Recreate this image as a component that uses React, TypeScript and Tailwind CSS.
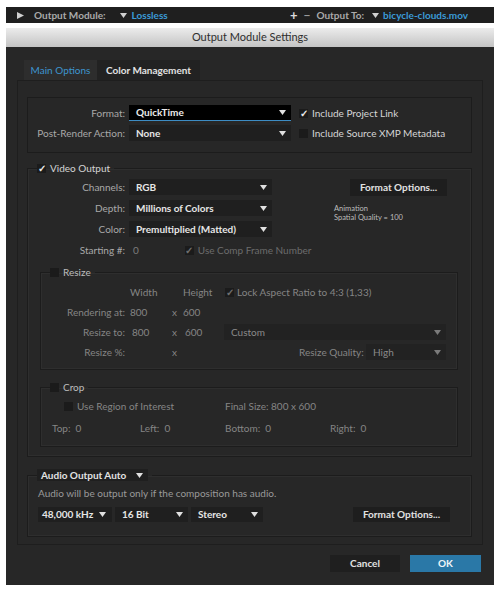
import React from "react";

type Children = { children?: React.ReactNode };

const Arrow = ({ className = "fill-[#e0e0e0]" }: { className?: string }) => (
  <svg width="7" height="5" viewBox="0 0 7 5" className={`shrink-0 ${className}`}>
    <path d="M0 0h7L3.5 5z" />
  </svg>
);

const Check = ({ checked, dim }: { checked?: boolean; dim?: boolean }) => (
  <span className="relative inline-flex h-[9px] w-[9px] shrink-0 items-center justify-center bg-[#1b1b1b]">
    {checked && (
      <span
        className={`text-[10px] leading-none font-bold ${dim ? "text-[#6e6e6e]" : "text-[#e8e8e8]"}`}
      >
        ✓
      </span>
    )}
  </span>
);

type DropProps = {
  value: string;
  className: string;
  dim?: boolean;
};

const Dropdown = ({ value, className, dim }: DropProps) => (
  <div className={`flex shrink-0 items-center justify-between pl-[7px] pr-[5px] ${className}`}>
    <span className={dim ? "text-[#8a8a8a]" : "font-bold text-[#e6e6e6]"}>{value}</span>
    <Arrow className={dim ? "fill-[#7a7a7a]" : "fill-[#e0e0e0]"} />
  </div>
);

const Group = ({ legend, className, children }: Children & { legend: React.ReactNode; className: string }) => (
  <fieldset className={`border border-[#1c1c1c] shadow-[inset_0_0_0_1px_#2e2e2e] ${className}`}>
    <legend className="ml-[9px] flex h-[12px] items-center gap-[4px] pr-[4px]">{legend}</legend>
    {children}
  </fieldset>
);

export default function App() {
  return (
    <div className="h-[594px] w-[500px] bg-white px-[6px] pt-[7px] font-['Lato',sans-serif] text-[10px] whitespace-nowrap text-[#a9a9a9]">
      {/* Top bar */}
      <div className="flex h-[16px] items-center bg-[#1f1f1f] pl-[11px] font-bold text-[#aaaaaa]">
        <svg width="7" height="7" viewBox="0 0 7 7" className="fill-[#cfcfcf]">
          <path d="M0 0l7 3.5L0 7z" />
        </svg>
        <span className="ml-[10px]">Output Module:</span>
        <Arrow className="ml-[14px] fill-[#d0d0d0]" />
        <span className="ml-[5px] text-[#3b9bd8]">Lossless</span>
        <span className="ml-auto text-[13px] leading-none text-[#dcdcdc]">+</span>
        <span className="ml-[6px] text-[12px] leading-none text-[#9a9a9a]">−</span>
        <span className="ml-[6px]">Output To:</span>
        <Arrow className="ml-[8px] fill-[#d0d0d0]" />
        <span className="ml-[4px] mr-[26px] text-[#3b9bd8]">bicycle-clouds.mov</span>
      </div>

      {/* Title bar */}
      <div className="mt-[5px] flex h-[19px] items-center justify-center bg-gradient-to-b from-[#ececec] to-[#c4c4c4] text-[11px] text-[#2e2e2e]">
        Output Module Settings
      </div>

      {/* Dialog body */}
      <div className="flex h-[538px] flex-col bg-[#272727] px-[11px] pt-[13px]">
        {/* Tabs */}
        <div className="ml-[7px] flex h-[20px]">
          <div className="flex w-[73px] items-center justify-center bg-[#2d2d2d] text-[#3d95cf]">Main Options</div>
          <div className="flex w-[103px] items-center justify-center bg-[#222222] font-bold text-[#e2e2e2]">
            Color Management
          </div>
        </div>

        {/* Tab panel */}
        <div className="flex h-[465px] flex-col border border-[#1e1e1e] pl-[9px] pr-[10px] pt-[16px]">
          {/* Format box */}
          <div className="flex h-[56px] flex-col gap-[4px] border border-[#1c1c1c] pt-[7px]">
            <div className="flex h-[16px] items-center">
              <span className="w-[97px] shrink-0 text-right">Format:</span>
              <div className="ml-[4px] flex h-[16px] w-[162px] shrink-0 items-center justify-between border-b border-[#3d8cc4] bg-black pl-[7px] pr-[5px]">
                <span className="font-bold text-[#ececec]">QuickTime</span>
                <Arrow />
              </div>
              <span className="ml-[8px] flex items-center gap-[4px] text-[#d6d6d6]">
                <Check checked />
                Include Project Link
              </span>
            </div>
            <div className="flex h-[16px] items-center">
              <span className="w-[97px] shrink-0 text-right">Post-Render Action:</span>
              <Dropdown value="None" className="ml-[4px] h-[16px] w-[162px] bg-[#1f1f1f]" />
              <span className="ml-[8px] flex items-center gap-[4px] text-[#d6d6d6]">
                <Check />
                Include Source XMP Metadata
              </span>
            </div>
          </div>

          {/* Video Output */}
          <Group
            className="mt-[9px] h-[295px]"
            legend={
              <>
                <Check checked />
                <span className="text-[#d4d4d4]">Video Output</span>
              </>
            }
          >
            <div className="mt-[5px] flex">
              <div className="flex w-[245px] shrink-0 flex-col gap-[5px]">
                {[
                  ["Channels:", "RGB"],
                  ["Depth:", "Millions of Colors"],
                  ["Color:", "Premultiplied (Matted)"],
                ].map(([label, value]) => (
                  <div key={label} className="flex h-[16px] items-center">
                    <span className="w-[97px] shrink-0 text-right">{label}</span>
                    <Dropdown value={value} className="ml-[4px] h-[16px] w-[143px] bg-[#1f1f1f]" />
                  </div>
                ))}
                <div className="flex h-[16px] items-center">
                  <span className="w-[97px] shrink-0 text-right">Starting #:</span>
                  <span className="ml-[8px] text-[#7c7c7c]">0</span>
                  <span className="ml-[46px] flex items-center gap-[4px] text-[#6c6c6c]">
                    <Check checked dim />
                    Use Comp Frame Number
                  </span>
                </div>
              </div>
              <div className="ml-[61px] flex flex-col">
                <div className="ml-[16px] flex h-[17px] w-[97px] items-center justify-center bg-[#1e1e1e] font-bold text-[#e2e2e2]">
                  Format Options...
                </div>
                <div className="mt-[8px] text-[7.5px] leading-[9px] text-[#bdbdbd]">
                  <div>Animation</div>
                  <div>Spatial Quality = 100</div>
                </div>
              </div>
            </div>

            {/* Resize */}
            <Group
              className="ml-[12px] mr-[13px] mt-[8px] h-[104px] text-[#858585]"
              legend={
                <>
                  <Check />
                  <span className="text-[#bdbdbd]">Resize</span>
                </>
              }
            >
              <div className="mt-[6px] flex flex-col gap-[4px]">
                <div className="flex h-[16px] items-center">
                  <span className="w-[84px] shrink-0" />
                  <span className="ml-[5px] w-[53px] shrink-0">Width</span>
                  <span className="w-[42px] shrink-0">Height</span>
                  <span className="flex items-center gap-[3px]">
                    <Check checked dim />
                    Lock Aspect Ratio to 4:3 (1,33)
                  </span>
                </div>
                <div className="flex h-[16px] items-center">
                  <span className="w-[84px] shrink-0 text-right">Rendering at:</span>
                  <span className="ml-[5px] w-[42px] shrink-0">800</span>
                  <span className="w-[11px] shrink-0">x</span>
                  <span>600</span>
                </div>
                <div className="flex h-[16px] items-center">
                  <span className="w-[84px] shrink-0 text-right">Resize to:</span>
                  <span className="ml-[7px] w-[40px] shrink-0">800</span>
                  <span className="w-[13px] shrink-0">x</span>
                  <span className="w-[39px] shrink-0">600</span>
                  <Dropdown value="Custom" dim className="h-[16px] w-[222px] bg-[#222222]" />
                </div>
                <div className="flex h-[16px] items-center">
                  <span className="w-[84px] shrink-0 text-right">Resize %:</span>
                  <span className="ml-[47px] w-[127px] shrink-0">x</span>
                  <span className="w-[62px] shrink-0 text-right">Resize Quality:</span>
                  <Dropdown value="High" dim className="ml-[5px] h-[16px] w-[80px] bg-[#222222]" />
                </div>
              </div>
            </Group>

            {/* Crop */}
            <Group
              className="ml-[12px] mr-[13px] mt-[11px] h-[66px] text-[#858585]"
              legend={
                <>
                  <Check />
                  <span className="text-[#bdbdbd]">Crop</span>
                </>
              }
            >
              <div className="mt-[6px] flex h-[14px] items-center">
                <span className="ml-[23px] flex w-[161px] shrink-0 items-center gap-[4px]">
                  <Check />
                  Use Region of Interest
                </span>
                <span>Final Size: 800 x 600</span>
              </div>
              <div className="mt-[8px] flex h-[14px] items-center">
                <span className="ml-[11px] w-[88px] shrink-0">Top:&nbsp; 0</span>
                <span className="w-[85px] shrink-0">Left:&nbsp; 0</span>
                <span className="w-[105px] shrink-0">Bottom:&nbsp; 0</span>
                <span>Right:&nbsp; 0</span>
              </div>
            </Group>
          </Group>

          {/* Audio */}
          <Group
            className="mt-[12px] h-[68px]"
            legend={
              <div className="flex h-[12px] w-[111px] items-center gap-[10px] bg-[#1f1f1f] pl-[4px] font-bold text-[#e2e2e2]">
                Audio Output Auto
                <Arrow />
              </div>
            }
          >
            <div className="ml-[10px] mt-[6px] h-[12px] leading-[12px] text-[#9a9a9a]">
              Audio will be output only if the composition has audio.
            </div>
            <div className="ml-[10px] mt-[8px] flex h-[15px] items-center gap-[3px]">
              <div className="flex h-[15px] w-[74px] shrink-0 items-center gap-[6px] bg-[#1f1f1f] pl-[4px] font-bold text-[#e6e6e6]">
                48,000 kHz
                <Arrow />
              </div>
              <Dropdown value="16 Bit" className="h-[15px] w-[73px] bg-[#1f1f1f] pl-[4px]" />
              <Dropdown value="Stereo" className="h-[15px] w-[72px] bg-[#1f1f1f] pl-[4px]" />
              <div className="ml-[87px] flex h-[15px] w-[97px] shrink-0 items-center justify-center bg-[#1e1e1e] font-bold text-[#e2e2e2]">
                Format Options...
              </div>
            </div>
          </Group>
        </div>

        {/* Buttons */}
        <div className="mr-[2px] mt-[10px] flex justify-end gap-[10px]">
          <div className="flex h-[17px] w-[70px] items-center justify-center bg-[#1f1f1f] font-bold text-[#e2e2e2]">
            Cancel
          </div>
          <div className="flex h-[17px] w-[71px] items-center justify-center bg-[#2a78a7] font-bold text-[#eef4f8]">
            OK
          </div>
        </div>
      </div>
    </div>
  );
}
